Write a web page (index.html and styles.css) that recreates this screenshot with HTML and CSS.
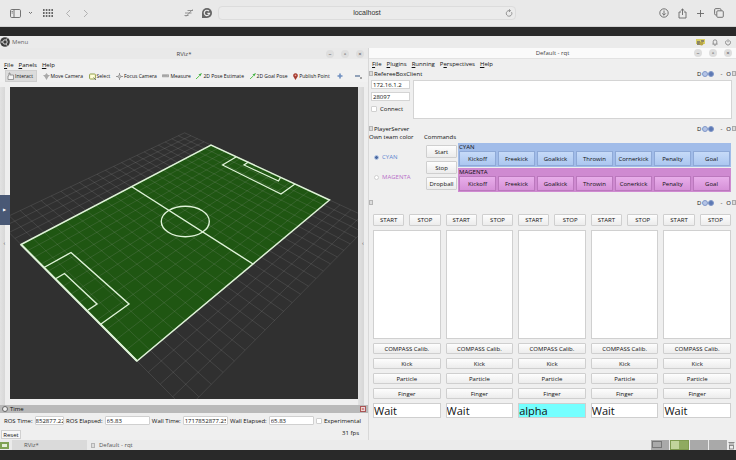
FILE: index.html
```html
<!DOCTYPE html>
<html lang="en">
<head>
<meta charset="utf-8">
<title>localhost</title>
<link rel="stylesheet" href="styles.css">
</head>
<body>
<header class="browser">
  <div class="browser-left">
    <button class="icon" aria-label="Sidebar"><svg width="11" height="9" viewBox="0 0 11 9"><rect x=".5" y=".5" width="10" height="8" rx="1.2"/><path d="M4 .5v8M1.6 2.5h1.2M1.6 4h1.2"/></svg></button>
    <button class="icon chev" aria-label="Tab groups"><svg width="5" height="4" viewBox="0 0 5 4"><path d="M1 1l1.5 1.5L4 1"/></svg></button>
    <button class="icon" aria-label="Top sites"><svg class="dots" width="10" height="8" viewBox="0 0 10 8"><path d="M0 1h10M0 4h10M0 7h10"/></svg></button>
    <button class="icon pale nav-first" aria-label="Back"><svg width="6" height="9" viewBox="0 0 6 9"><path d="M5 1L1.5 4.5 5 8"/></svg></button>
    <button class="icon pale" aria-label="Forward"><svg width="6" height="9" viewBox="0 0 6 9"><path d="M1 1l3.5 3.5L1 8"/></svg></button>
    <div class="browser-ext">
      <button class="icon mid" aria-label="Extension"><svg width="10" height="8" viewBox="0 0 10 8"><path d="M3.500 1.500H9M1 4h6.500M.5 6.500h4M8.500.5L2 7.500"/></svg></button>
      <button class="icon" aria-label="Grammar"><svg width="10" height="10" viewBox="0 0 10 10"><path d="M5 0a5 5 0 1 1 0 10H0V5a5 5 0 0 1 5-5z" fill="#666" stroke="none"/><path d="M7 3.2A2.7 2.7 0 1 0 7.6 5.4H5.4" stroke="#eee" stroke-width="1.1"/></svg></button>
    </div>
  </div>
  <div class="address"><span>localhost</span>
    <button class="icon mid" aria-label="Reload"><svg width="8" height="8" viewBox="0 0 8 8"><path d="M6.6 3.2A2.8 2.8 0 1 1 4 1.6h1.3M4 .3l1.5 1.3L4 3"/></svg></button>
  </div>
  <div class="browser-right">
    <button class="icon" aria-label="Downloads"><svg width="10" height="10" viewBox="0 0 10 10"><circle cx="5" cy="5" r="4.2"/><path d="M5 2.5v4.7M3.2 5.4L5 7.2l1.8-1.8"/></svg></button>
    <button class="icon" aria-label="Share"><svg width="9" height="11" viewBox="0 0 9 11"><path d="M3 4H1v6h7V4H6M4.5 7V1M2.6 2.8L4.5 1l1.9 1.8"/></svg></button>
    <button class="icon" aria-label="New tab"><svg width="9" height="9" viewBox="0 0 9 9"><path d="M4.5 1v7M1 4.5h7"/></svg></button>
    <button class="icon" aria-label="Tabs"><svg width="10" height="10" viewBox="0 0 10 10"><path d="M2.5 7H1.8A1.2 1.2 0 0 1 .6 5.8V1.8A1.2 1.2 0 0 1 1.8.6h4A1.2 1.2 0 0 1 7 1.8v.7"/><rect x="2.8" y="2.8" width="6.5" height="6.5" rx="1"/></svg></button>
  </div>
</header>

<main class="desktop">
  <div class="panel">
    <button class="menu-button"><svg width="10" height="10" viewBox="0 0 10 10"><circle cx="5" cy="5" r="4.8" fill="#3b3b3b"/><circle cx="5" cy="5" r="2.2" fill="none" stroke="#ddd" stroke-width="1"/><path d="M.8 5h2M6.2 2.8l1-1.5M6.2 7.2l1 1.5" stroke="#ddd"/></svg>Menu</button>
    <div class="tray">
      <svg width="9" height="7" viewBox="0 0 9 7"><path fill="#d8cf63" d="M0 0h9v5H0z"/><path fill="#8b8468" d="M1 2h3v4H1zM5 1h3v2H5z"/><circle cx="5.5" cy="4.5" r="2" fill="#b7a444"/></svg>
      <svg width="6" height="7" viewBox="0 0 6 7"><path d="M.5 5.2h5M1.2 5V2.600a1.800 1.800 0 0 1 3.600 0V5M2.300 6.300h1.400" fill="none" stroke="#777" stroke-width=".8"/></svg>
      <svg width="6" height="7" viewBox="0 0 6 7"><path d="M1.5 1.500a2.500 2.500 0 1 0 3 0M3 .3v3" fill="none" stroke="#777" stroke-width=".8"/></svg>
    </div>
  </div>

  <div class="windows">
    <section class="window rviz">
      <div class="titlebar"><h1>RViz*</h1>
        <div class="controls"><button aria-label="Minimize">–</button><button aria-label="Maximize">▫</button><button aria-label="Close">×</button></div>
      </div>
      <nav class="menubar"><button><u>F</u>ile</button><button><u>P</u>anels</button><button><u>H</u>elp</button></nav>
      <div class="toolbar">
        <button class="active"><svg width="7" height="8" viewBox="0 0 7 8"><path d="M1 7.500V4l1-.5V1h1v2h3.500v4.500z" fill="#f4f4f4" stroke="#777" stroke-width=".7"/></svg>Interact</button>
        <button><svg width="7" height="7" viewBox="0 0 7 7"><path d="M3.500 0L5 2h2L5.200 4l-1.700 3-1.700-3L0 2h2z" fill="#aaa"/></svg>Move Camera</button>
        <button><svg width="7" height="7" viewBox="0 0 7 7"><rect x=".6" y="1" width="5.8" height="5" rx=".8" fill="#fffed8" stroke="#91a04b"/><path d="M4.500 4.500L7 7" stroke="#777"/></svg>Select</button>
        <button><svg width="7" height="7" viewBox="0 0 7 7"><path d="M3.500 0v7M0 3.500h7" stroke="#999"/><circle cx="3.5" cy="3.5" r="1.5" fill="#ccc" stroke="#888" stroke-width=".6"/></svg>Focus Camera</button>
        <button><svg width="7" height="4" viewBox="0 0 7 4"><path fill="#bbb" stroke="#888" stroke-width=".6" d="M.3.8h6.400v2H.3zM2 1v1M4 1v1"/></svg>Measure</button>
        <button><svg width="6" height="6" viewBox="0 0 6 6"><path d="M0 6l3.500-3.300" stroke="#5bc64e"/><path d="M6 0L2.500 1.500 4.300 3.300z" fill="#3fae3f"/></svg>2D Pose Estimate</button>
        <button><svg width="6" height="6" viewBox="0 0 6 6"><path d="M0 6l3.500-3.300" stroke="#5bc64e"/><path d="M6 0L2.500 1.500 4.300 3.300z" fill="#3fae3f"/></svg>2D Goal Pose</button>
        <button><svg width="5" height="7" viewBox="0 0 5 7"><path d="M2.500 7L.4 3.500a2.300 2.300 0 1 1 4.200 0z" fill="#a43b30"/><circle cx="2.5" cy="2.3" r=".9" fill="#e9a39a"/></svg>Publish Point</button>
        <button class="plus" aria-label="Add tool"><svg width="6" height="6" viewBox="0 0 6 6"><path d="M3 .5v5M.5 3h5" stroke="#6f8fc0" stroke-width="1.600"/></svg></button>
        <button aria-label="Remove tool"><svg width="7" height="6" viewBox="0 0 7 6"><path d="M0 3h5" stroke="#687ea0" stroke-width="1.400"/><path d="M5 5h2" stroke="#555"/></svg></button>
      </div>
      <div class="stage">
        <div class="splitter"><span class="grip"><i>▶</i></span><i class="tick">‹</i></div>
        <svg id="scene" class="scene" viewBox="10 87 348 312" preserveAspectRatio="none" role="img" aria-label="Soccer field">
          <path d="M21 244.500L211 145l118.500 55L137 361z" fill="#1f5612"/>
          <path id="grid" class="grid"/>
          <g class="lines">
            <path d="M21 244.500L211 145l118.500 55L137 361z" stroke-width="1.500"/>
            <path d="M21 244.500L137 361" stroke-width="2"/>
            <path d="M131.500 186.500L253 264"/>
            <ellipse cx="185.3" cy="221.5" rx="24" ry="15.2"/>
            <path d="M44 267.500l27-15 58 51.500-28 20M56 278.500l8.500-5 32.500 30.500-9 6"/>
            <path d="M236 157l-13.500 8L281 194l14-10M248.500 162l-4.500 3 34.500 16 2-3.500" stroke-width="1.200"/>
          </g>
        </svg>
        <div class="splitter"><i class="tick">‹</i></div>
      </div>
      <div class="time-head"><span class="clock"></span>Time<button aria-label="Close time panel">×</button></div>
      <form class="time">
        <label for="t1">ROS Time:</label><input id="t1" class="short" value="852877.22">
        <label for="t2">ROS Elapsed:</label><input id="t2" value="65.83">
        <label for="t3">Wall Time:</label><input id="t3" value="1717852877.25">
        <label for="t4">Wall Elapsed:</label><input id="t4" value="65.83">
        <label class="check"><input type="checkbox">Experimental</label>
      </form>
      <div class="reset"><button>Reset</button><span>31 fps</span></div>
    </section>

    <section class="window rqt">
      <div class="titlebar"><h1>Default - rqt</h1>
        <div class="controls"><button aria-label="Minimize">–</button><button aria-label="Maximize">▫</button><button aria-label="Close">×</button></div>
      </div>
      <nav class="menubar"><button><u>F</u>ile</button><button><u>P</u>lugins</button><button><u>R</u>unning</button><button>P<u>e</u>rspectives</button><button><u>H</u>elp</button></nav>
      <div class="dock"><i class="box"></i><h2>RefereeBoxClient</h2><span class="dock-tools">D<b></b><b></b><em>-</em>O<i class="box"></i></span></div>
      <div class="referee">
        <div class="referee-form">
          <input aria-label="Address" value="172.16.1.2">
          <input aria-label="Port" value="28097">
          <label class="check"><input type="checkbox">Connect</label>
        </div>
        <textarea aria-label="Messages" readonly></textarea>
      </div>
      <div class="dock"><i class="box"></i><h2>PlayerServer</h2><span class="dock-tools">D<b></b><b></b><em>-</em>O<i class="box"></i></span></div>
      <div class="server">
        <fieldset class="team">
          <legend>Own team color</legend>
          <label class="cyan-text"><input type="radio" name="team" checked>CYAN</label>
          <label class="magenta-text"><input type="radio" name="team">MAGENTA</label>
        </fieldset>
        <fieldset class="commands">
          <legend>Commands</legend>
          <div class="general"><button>Start</button><button>Stop</button><button>Dropball</button></div>
          <div class="sides">
            <div class="side cyan"><h3>CYAN</h3><div><button>Kickoff</button><button>Freekick</button><button>Goalkick</button><button>Throwin</button><button>Cornerkick</button><button>Penalty</button><button>Goal</button></div></div>
            <div class="side magenta"><h3>MAGENTA</h3><div><button>Kickoff</button><button>Freekick</button><button>Goalkick</button><button>Throwin</button><button>Conerkick</button><button>Penalty</button><button>Goal</button></div></div>
          </div>
        </fieldset>
      </div>
      <div class="dock"><i class="box"></i><span class="dock-tools">D<b></b><b></b><em>-</em>O<i class="box"></i></span></div>
      <div class="robots">
        <div class="robot"><div class="pair"><button>START</button><button>STOP</button></div><textarea aria-label="Robot 1 log" readonly></textarea><button>COMPASS Calib.</button><button>Kick</button><button>Particle</button><button>Finger</button><input aria-label="Robot 1 state" value="Wait"></div>
        <div class="robot"><div class="pair"><button>START</button><button>STOP</button></div><textarea aria-label="Robot 2 log" readonly></textarea><button>COMPASS Calib.</button><button>Kick</button><button>Particle</button><button>Finger</button><input aria-label="Robot 2 state" value="Wait"></div>
        <div class="robot"><div class="pair"><button>START</button><button>STOP</button></div><textarea aria-label="Robot 3 log" readonly></textarea><button>COMPASS Calib.</button><button>Kick</button><button>Particle</button><button>Finger</button><input class="on" aria-label="Robot 3 state" value="alpha"></div>
        <div class="robot"><div class="pair"><button>START</button><button>STOP</button></div><textarea aria-label="Robot 4 log" readonly></textarea><button>COMPASS Calib.</button><button>Kick</button><button>Particle</button><button>Finger</button><input aria-label="Robot 4 state" value="Wait"></div>
        <div class="robot"><div class="pair"><button>START</button><button>STOP</button></div><textarea aria-label="Robot 5 log" readonly></textarea><button>COMPASS Calib.</button><button>Kick</button><button>Particle</button><button>Finger</button><input aria-label="Robot 5 state" value="Wait"></div>
      </div>
    </section>
  </div>

  <footer class="taskbar">
    <span class="desk"></span>
    <button class="task current"><i></i>RViz*</button>
    <button class="task"><i class="box"></i>Default - rqt</button>
    <div class="pager"><span class="mini"></span><span class="live"></span><span></span><span></span></div>
    <svg class="bin" width="7" height="9" viewBox="0 0 7 9"><path d="M.5 1.500h6M1 3h5" stroke="#888"/><rect x="1.5" y="4.5" width="4" height="3.5" fill="none" stroke="#777" stroke-width=".8"/></svg>
  </footer>
</main>
<script src="scene.js"></script>
</body>
</html>
```

FILE: styles.css
```css
* { box-sizing: border-box; }

body {
  margin: 0;
  min-height: 100vh;
  display: flex;
  flex-direction: column;
  background: #292929;
  color: #111;
  font: 500 6px/8px "Open Sans", "Noto Sans", sans-serif;
}

button, input, textarea, h1, h2, h3, fieldset, legend {
  margin: 0;
  padding: 0;
  border: 0;
  font: inherit;
  color: inherit;
  min-width: 0;
}
button { background: none; white-space: nowrap; }
textarea { display: block; resize: none; }
i, em { font-style: normal; }
svg { display: block; flex: none; }

/* Browser toolbar */
.browser {
  height: 27px;
  display: flex;
  align-items: center;
  background: #e9e9e9;
  border-bottom: 1px solid #d2d2d2;
}
.icon { color: #666; }
.icon svg { fill: none; stroke: currentColor; stroke-width: .9; }
.icon .dots { stroke-width: 2; stroke-dasharray: 1.6 1.2; }
.icon.mid { color: #888; }
.icon.pale { color: #aaa; }
.browser-left { flex: 1; display: flex; align-items: center; padding-left: 10px; gap: 7px; }
.chev { margin-right: 3px; }
.nav-first { margin: 0 5px; }
.browser-ext { display: flex; align-items: center; gap: 8px; margin: 0 6px 0 auto; }
.address {
  flex: none;
  width: 41%;
  max-width: 298px;
  height: 14px;
  display: flex;
  align-items: center;
  padding: 0 2px 0 10px;
  border: 1px solid #dcdcdc;
  border-radius: 4px;
  background: #ebebeb;
  font: 7px/10px "Liberation Sans", sans-serif;
  color: #333;
}
.address span { flex: 1; text-align: center; }
.browser-right { flex: 1; display: flex; align-items: center; justify-content: flex-end; gap: 9px; padding-right: 12px; }

/* Desktop */
.desktop {
  flex: 1;
  display: flex;
  flex-direction: column;
  margin: 9px 0 10px;
  background: #efefef;
}
.panel { height: 12px; display: flex; justify-content: space-between; align-items: center; background: #ebebeb; }
.menu-button { display: flex; align-items: center; gap: 2px; color: #666; }
.tray { display: flex; align-items: center; gap: 7px; padding-right: 5px; }
.windows { flex: 1; display: grid; grid-template-columns: 1fr 1fr; }
.window { display: flex; flex-direction: column; min-width: 0; }
.titlebar { height: 11px; display: grid; grid-template-columns: 1fr auto 1fr; align-items: center; background: #e9e9e9; color: #444; }
.titlebar h1 { grid-column: 2; }
.controls { display: flex; justify-content: flex-end; gap: 7px; padding-right: 4px; }
.controls button { width: 8px; height: 8px; line-height: 8px; border-radius: 4px; background: #dedede; color: #444; }
.menubar { height: 11px; display: flex; align-items: center; gap: 5px; padding: 0 4px; }

/* RViz */
.toolbar { height: 12px; display: flex; justify-content: space-between; padding: 0 6px 0 5px; background: #f1f1f1; }
.toolbar button { display: flex; align-items: center; gap: 1px; font-size: 5px; }
.toolbar .active { width: 32px; padding: 0 1px; background: #dcdcdc; border: 1px solid #cfcfcf; }
.toolbar .plus { margin: 0 6px 0 2px; }
.stage { flex: 1; display: flex; padding-top: 5px; }
.splitter { flex: none; width: 9px; margin-bottom: -6px; display: flex; flex-direction: column; align-items: center; justify-content: center; background: linear-gradient(90deg, #e2e2e2, #d6d6d6 60%, #eee 60%); color: #555; gap: 14px; }
.stage .grip { width: 10px; height: 30px; margin-top: -50px; display: grid; place-items: center; background: #495875; color: #fff; font-size: 4px; }
.splitter:last-child { width: 10px; padding-bottom: 6px; }
.scene { flex: 1 1 0; min-width: 0; height: 312px; background: #303030; margin-left: 1px; }
.grid { fill: none; stroke: #aaa; stroke-opacity: .22; stroke-width: .8; }
.lines { fill: none; stroke: #dff3d8; stroke-width: 1.4; }
.time-head { height: 8px; margin-top: 6px; display: flex; align-items: center; gap: 2px; padding: 0 2px; background: #b9b9b9; position: relative; }
.clock { width: 6px; height: 6px; border: 1px solid #666; border-radius: 50%; background: #eee; }
.time-head button { width: 6px; height: 6px; margin-left: auto; border: 1px solid #a55; background: #f0dada; color: #a22; line-height: 4px; }
.time { height: 15px; display: flex; align-items: center; gap: 2px; padding: 0 7px 0 4px; }
.time input:not([type]) { width: 46px; height: 9px; padding: 0 1px; border: 1px solid #d0d0d0; border-radius: 1px; background: #fff; }
.time input.short:not([type]) { width: 30px; padding: 0; }
.time label { white-space: nowrap; }
.check { display: flex; align-items: center; gap: 2px; }
.time .check { margin-left: auto; }
input[type="checkbox"], input[type="radio"] { appearance: none; width: 6px; height: 6px; border: 1px solid #d0d0d0; border-radius: 1px; background: #fff; }
.reset { height: 12px; display: flex; justify-content: space-between; padding: 1px 9px 0 1px; }
.reset button { align-self: flex-end; height: 9px; width: 20px; margin-bottom: 1px; border: 1px solid #d0d0d0; background: #f8f8f8; }

/* rqt */
.rqt { border-left: 1px solid #d8d8d8; }
.rqt .titlebar { background: #fafafa; border-bottom: 1px solid #e2e2e2; }
.rqt .menubar { height: 10px; padding: 0 3px; }
.dock { height: 9px; display: flex; align-items: center; gap: 1px; }
.box { width: 4px; height: 5px; border: 1px solid #b5b5b5; background: #ddd; }
.dock-tools { margin-left: auto; display: flex; align-items: center; gap: 1px; }
.dock-tools b { width: 6px; height: 6px; border: 1px solid #8198c8; border-radius: 50%; background: #b4c4e6; }
.dock-tools b + b { background: #5c78b4; margin-left: -1px; }
.dock-tools em { margin: 0 3px 0 5px; }
.dock-tools .box { border-color: #aaa; }
.referee { display: flex; gap: 3px; padding: 2px 4px 5px 2px; }
.referee-form { width: 39px; display: flex; flex-direction: column; gap: 3px; }
.referee-form > input { height: 9px; width: 100%; padding: 0 1px; border: 1px solid #d4d4d4; background: #fff; }
.referee-form .check { height: 10px; }
.referee textarea { flex: 1; height: 39px; border: 1px solid #d4d4d4; background: #fff; }
.rqt .check { gap: 3px; }
.server { display: flex; gap: 2px; padding: 0 5px 6px 0; }
fieldset { display: flex; }
legend { white-space: nowrap; height: 8px; }
.team { width: 53px; flex-direction: column; gap: 12px; }
.team label { display: flex; align-items: center; gap: 3px; padding-left: 5px; }
.team label:first-of-type { margin-top: 12px; }
.team input { width: 5px; height: 5px; border-radius: 50%; }
.team input:checked { border-color: #b9cbe8; background: #4a68a0; }
.cyan-text { color: #5d86cf; }
.magenta-text { color: #b86fc8; }
.commands { flex: 1; gap: 1px; }
.commands legend { margin-bottom: 2px; }
.general { width: 31px; display: flex; flex-direction: column; gap: 3px; padding-top: 2px; margin-left: 2px; }
.general button, .robot button {
  height: 13px;
  border: 1px solid #cfcfcf;
  border-radius: 1px;
  background: linear-gradient(#fdfdfd, #ececec);
}
.sides { flex: 1; display: flex; flex-direction: column; gap: 1px; }
.side { padding: 0 1px 1px; background: #a1bce9; }
.side h3 { height: 8px; line-height: 8px; }
.side > div { display: grid; grid-template-columns: repeat(7, 1fr); gap: 2px; }
.side button { height: 15px; border: 1px solid #8ea9d7; background: linear-gradient(#c6daf8, #abc7f0); }
.side.magenta { background: #cf8ad1; }
.magenta button { border-color: #bb78bd; background: linear-gradient(#e8aeea, #d691d8); }
.robots { flex: 1; display: grid; grid-template-columns: repeat(5, 1fr); gap: 5px; padding: 7px 5px 22px 4px; }
.robot { display: flex; flex-direction: column; gap: 4px; min-width: 0; }
.pair { display: grid; grid-template-columns: 1fr 1fr; gap: 5px; }
.robot button { height: 11px; }
.pair button { height: 12px; }
.robot textarea { flex: 1; width: 100%; min-height: 40px; border: 1px solid #d0d0d0; background: #fff; }
.robot input { width: 100%; height: 15px; padding: 0; border: 1px solid #cfcfcf; background: #fff; font-size: 11px; line-height: 13px; color: #111; }
.robot .on { background: #75ffff; }

/* Taskbar */
.taskbar { height: 10px; display: flex; align-items: center; background: #ebebeb; color: #555; }
.desk { width: 9px; height: 7px; border: 2px solid #7fa253; background: #e5efd8; }
.task { display: flex; align-items: center; gap: 4px; height: 10px; padding: 0 3px; }
.task.current { width: 75px; margin: 0 1px 0 3px; padding-left: 8px; background: #dadada; }
.pager { margin-left: auto; width: 76px; height: 10px; display: grid; grid-template-columns: repeat(4, 1fr); gap: 1px; }
.pager span { background: #a9a9a9; }
.pager .live { border: 1px solid #7f9b50; background: linear-gradient(90deg, #c2d49c 50%, #8faa60 50%); }
.pager .mini::before { content: ""; display: block; width: 8px; height: 5px; margin: 1px; border: 1px solid #777; }
.bin { margin: 0 1px; }
```

FILE: scene.js
```js
// Projects the 22 x 22 m ground grid; the field covers u 0..22 and v 0..14.
function project(u, v) {
  const s = u / 22, t = v / 14;
  const w = 1 + 0.3855 * s - 0.2503 * t;
  return ((21 + 271.3 * s + 81.7 * t) / w).toFixed(1) + " " +
         ((244.5 - 43.6 * s + 26.1 * t) / w).toFixed(1);
}
let d = "";
for (let i = 0; i <= 22; i++) {
  d += "M" + project(i, -4) + "L" + project(i, 18);
  d += "M" + project(0, i - 4) + "L" + project(22, i - 4);
}
document.getElementById("grid").setAttribute("d", d);
```
